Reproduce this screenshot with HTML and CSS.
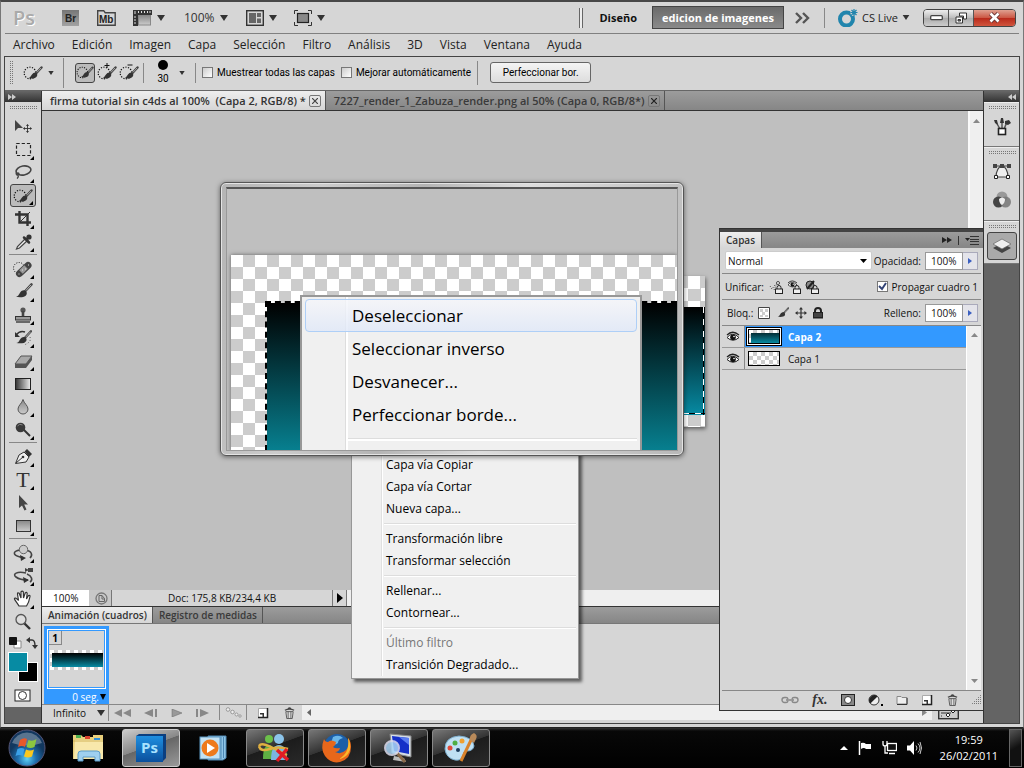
FILE: index.html
```html
<!DOCTYPE html>
<html lang="es">
<head>
    <meta charset="UTF-8">
    <meta name="viewport" content="width=device-width, initial-scale=1.0">
    <title>Photoshop - firma tutorial sin c4ds</title>
    <link rel="stylesheet" href="styles.css">
</head>
<body>

    <!-- shared icons -->
    <svg class="defs" width="0" height="0" aria-hidden="true">
        <defs>
            <linearGradient id="g" x1="0" x2="1"><stop stop-color="#333"/><stop offset="1" stop-color="#eee"/></linearGradient>
            <linearGradient id="gv" x1="0" x2="0" y1="0" y2="1"><stop stop-color="#888"/><stop offset="1" stop-color="#ccc"/></linearGradient>
            <radialGradient id="orb" cx=".5" cy=".8"><stop stop-color="#5fd0f5"/><stop offset=".5" stop-color="#1f6fae"/><stop offset="1" stop-color="#12385f"/></radialGradient>
            <linearGradient id="blue" x1="0" x2="0" y1="0" y2="1"><stop stop-color="#1f8fe0"/><stop offset="1" stop-color="#0a4f9c"/></linearGradient>
            <symbol id="brush" viewBox="0 0 20 18">
                <path d="M19 1.500 12 9" stroke="#444" stroke-width="2.600" stroke-linecap="round"/>
                <path d="M18.500 2 13 8" stroke="#bbb" stroke-width="1"/>
                <path d="M13 8.500c2 2 1 5-2 6-3 .8-6 .6-8.500 0 3-.6 3-2.500 4.500-4.500 1.500-2 4-3 6-1.500z" fill="#333"/>
            </symbol>
            <symbol id="quick" viewBox="0 0 20 18">
                <circle cx="7" cy="9" r="5.800" fill="none" stroke="#111" stroke-width="1.200" stroke-dasharray="1.200 1.400"/>
                <path d="M18.500 3.500 13 9.500" stroke="#444" stroke-width="2.400" stroke-linecap="round"/>
                <path d="M18 4 14 8.300" stroke="#bbb" stroke-width=".8"/>
                <path d="M13.500 9c1.500 1.700.8 4-1.600 5-2.300.8-4.500.6-6.400 0 2-.6 2.300-2 3.500-3.500 1.200-1.600 3-2.600 4.500-1.500z" fill="#333"/>
            </symbol>
            <symbol id="down" viewBox="0 0 8 6"><path d="M0 0h8L4 6z" fill="#333"/></symbol>
            <symbol id="eye" viewBox="0 0 14 12">
                <path d="M1 6.500Q6.500 0 13 6.500 7 12 1 6.500z" fill="#fff" stroke="#222"/>
                <circle cx="7" cy="6.300" r="2.800" fill="#111"/><circle cx="8" cy="5.500" r=".8" fill="#fff"/>
                <path d="M1 4Q6.500-1.500 13 4" fill="none" stroke="#222" stroke-width="1.200"/>
            </symbol>
            <symbol id="lock" viewBox="0 0 8 9"><path d="M2 4V2.500a2 2 0 0 1 4 0V4" fill="none" stroke="#222"/><rect x=".5" y="4" width="7" height="4.500" fill="#eee" stroke="#222"/></symbol>
            <symbol id="move" viewBox="0 0 12 12"><path d="M6 1v10M1 6h10" stroke="#333" stroke-width="1.200"/><path d="M6 0 8 2.600H4zM6 12 4 9.400h4zM0 6l2.600-2v4zM12 6 9.400 8V4z" fill="#333"/></symbol>
            <symbol id="page" viewBox="0 0 12 12"><path d="M1.500 1.500h9v9h-9z" fill="#fff" stroke="#aaa"/><path d="M10.500 1v9.500H1" fill="none" stroke="#222" stroke-width="1.500"/><path d="M3 6h4v4H5.500V7.500H3z" fill="#333"/></symbol>
            <symbol id="trash" viewBox="0 0 12 13"><path d="M1 3.500q5-2.500 10 0M4.500 2q1.500-2 3 0" fill="none" stroke="#444" stroke-width="1.500"/><path d="M2 5h8l-1 7.500H3z" fill="#ddd" stroke="#555"/><path d="M4.500 5v7M7.500 5v7" stroke="#444" stroke-width=".8"/></symbol>
        </defs>
    </svg>

    <div class="app">
        <header class="titlebar">
            <span class="ps-logo">Ps</span>
            <button class="plain br" aria-label="Bridge"><svg width="17" height="16"><rect width="17" height="16" fill="url(#gv)"/><rect x="0" y="0" width="17" height="16" fill="#555" opacity=".35"/><text x="3" y="12" class="icon-text">Br</text></svg></button>
            <button class="plain mb" aria-label="Mini Bridge"><svg width="19" height="16"><path d="M.7 15.300V.7h6l1.500 2h10v12.600z" fill="none" stroke="#444" stroke-width="1.400"/><text x="2" y="13" class="icon-text">Mb</text></svg></button>
            <button class="plain film" aria-label="Ver extras"><svg width="19" height="16"><path d="M0 0h19v5H5v11H0z" fill="#333"/><path d="M2 1v3M5.500 1v2M8.500 1v2M11.500 1v2M14.500 1v2M17 1v2M1 7h2M1 10h2M1 13h2" stroke="#ddd"/><rect x="5.500" y="5.500" width="12" height="9.500" fill="url(#gv)" stroke="#888"/></svg><svg width="8" height="6"><use href="#down"/></svg></button>
            <button class="plain zoom">100%<svg width="8" height="6"><use href="#down"/></svg></button>
            <button class="plain arrange" aria-label="Organizar documentos"><svg width="18" height="16"><rect x=".7" y=".7" width="16.600" height="14.600" fill="none" stroke="#333" stroke-width="1.400"/><path d="M3 3h7v10H3zM11 3h4v4h-4zM11 8.500h4V13h-4z" fill="#666"/></svg><svg width="8" height="6"><use href="#down"/></svg></button>
            <button class="plain screen" aria-label="Modo de pantalla"><svg width="18" height="16"><path d="M.5 4V.5H4M14 .5h3.500V4M17.500 12v3.500H14M4 15.500H.500V12" fill="none" stroke="#333"/><rect x="3.500" y="3.500" width="11" height="9" fill="#888" stroke="#222" stroke-width="1.200"/></svg><svg width="8" height="6"><use href="#down"/></svg></button>
            <span class="double-line"></span>
            <button class="plain design">Diseño</button>
            <button class="workspace-on">edicion de imagenes</button>
            <button class="plain more" aria-label="Más espacios"><svg width="15" height="12"><path d="M1 1l5 5-5 5M8 1l5 5-5 5" fill="none" stroke="#555" stroke-width="2.400"/></svg></button>
            <span class="line"></span>
            <button class="plain cslive"><svg width="20" height="18"><circle cx="8.500" cy="10" r="6.500" fill="none" stroke="#2185ad" stroke-width="4"/><path d="M16 0v7M12.500 3.500h7M13.500 1l5 5M18.500 1l-5 5" stroke="#d6d6d6" stroke-width="3"/><path d="M16 0v7M12.500 3.500h7M13.500 1l5 5M18.500 1l-5 5" stroke="#2185ad" stroke-width="1.200"/></svg><span>CS Live</span><svg width="8" height="5"><use href="#down"/></svg></button>
            <div class="win-buttons">
                <button aria-label="Minimizar"><svg width="13" height="6"><rect x=".7" y=".7" width="11.600" height="4" rx="1" fill="#fff" stroke="#444" stroke-width="1.300"/></svg></button>
                <button aria-label="Restaurar"><svg width="12" height="12"><path d="M4.500 1h7v6h-3V4h-4z" fill="#fff" stroke="#333"/><path d="M1 5h6.500v6H1z" fill="#fff" stroke="#333"/><path d="M3 7.500h2.500v1.500H3z" fill="#777" stroke="#333"/></svg></button>
                <button class="close" aria-label="Cerrar"><svg width="13" height="11"><path d="M2.500 1.500l8 8M10.500 1.500l-8 8" stroke="#633" stroke-width="4.400"/><path d="M2.500 1.500l8 8M10.500 1.500l-8 8" stroke="#fff" stroke-width="2.600"/></svg></button>
            </div>
        </header>

        <nav class="menubar">
            <a href="#">Archivo</a>
            <a href="#">Edición</a>
            <a href="#">Imagen</a>
            <a href="#">Capa</a>
            <a href="#">Selección</a>
            <a href="#">Filtro</a>
            <a href="#">Análisis</a>
            <a href="#">3D</a>
            <a href="#">Vista</a>
            <a href="#">Ventana</a>
            <a href="#">Ayuda</a>
        </nav>

        <div class="frame">
            <div class="options">
                <span class="grip"></span>
                <button class="plain preset" aria-label="Herramienta"><svg width="20" height="18"><use href="#quick"/></svg><svg width="6" height="4"><use href="#down"/></svg></button>
                <span class="line tall"></span>
                <div class="modes">
                    <button class="plain on" aria-label="Nueva"><svg width="18" height="17"><use href="#quick"/></svg></button>
                    <button class="plain" aria-label="Añadir"><svg width="20" height="19" viewBox="0 0 20 19"><use href="#quick" y="1" width="20" height="18"/><path d="M10 0v5M7.500 2.500h5" stroke="#111"/></svg></button>
                    <button class="plain" aria-label="Restar"><svg width="20" height="19" viewBox="0 0 20 19"><use href="#quick" y="1" width="20" height="18"/><path d="M8.500 2h5" stroke="#111"/></svg></button>
                </div>
                <span class="line"></span>
                <button class="plain size"><span class="dot"></span>30</button>
                <svg class="size-arrow" width="6" height="4"><use href="#down"/></svg>
                <span class="line"></span>
                <label class="check"><input type="checkbox"> Muestrear todas las capas</label>
                <label class="check"><input type="checkbox"> Mejorar automáticamente</label>
                <span class="line"></span>
                <button class="refine">Perfeccionar bor.</button>
            </div>

            <div class="main">
                <aside class="toolbox">
                    <div class="dark-head"><svg width="8" height="6"><path d="M0 0l4 3-4 3zM4 0l4 3-4 3z" fill="#ccc"/></svg></div>
                    <div class="dots"></div>
                    <div class="tools">
                        <button class="tool single" aria-label="Mover"><svg width="24" height="20"><path d="M4 3v11l3-3h5z" fill="#444"/><use href="#move" x="12" y="7" width="9" height="9"/></svg></button>
                        <button class="tool" aria-label="Marco"><svg width="24" height="20"><rect x="5.500" y="3.500" width="14" height="12" fill="none" stroke="#222" stroke-width="1.200" stroke-dasharray="3.200 2"/></svg></button>
                        <button class="tool" aria-label="Lazo"><svg width="24" height="20"><ellipse cx="12.500" cy="7.500" rx="7.500" ry="4.500" transform="rotate(-10 12.500 7.500)" fill="none" stroke="#444" stroke-width="1.600"/><path d="M6 9c-2 2 0 4 1.500 2.500S6 9 7 11.500s0 3-1 4" fill="none" stroke="#444" stroke-width="1.300"/></svg></button>
                        <button class="tool on" aria-label="Selección rápida"><svg width="20" height="18"><use href="#quick"/></svg></button>
                        <button class="tool" aria-label="Recortar"><svg width="24" height="20"><path d="M8.500 2v11.500H20M4 5.500h12.500V17" fill="none" stroke="#333" stroke-width="2.400"/><path d="M8.500 13.500 19 3" stroke="#333"/></svg></button>
                        <button class="tool" aria-label="Cuentagotas"><svg width="24" height="20"><path d="M15 6 6.500 14.500 5.500 17l3-1L17 8" fill="#eee" stroke="#444" stroke-width="1.200"/><path d="M13 5.500l5 5M16.500 6.500l2-2" stroke="#333" stroke-width="2.500" stroke-linecap="round"/><circle cx="18" cy="5" r="2.600" fill="#333"/></svg></button>
                        <hr>
                        <button class="tool" aria-label="Pincel corrector"><svg width="24" height="20"><circle cx="8" cy="9" r="5.500" fill="none" stroke="#111" stroke-dasharray="1 1.500"/><path d="M8.500 14.500l8.500-8" stroke="#444" stroke-width="7" stroke-linecap="round"/><path d="M10 13l5-5" stroke="#999" stroke-width="5"/><path d="M7.500 15h1M17 6h1M11 11h1M14 10h1" stroke="#ddd"/></svg></button>
                        <button class="tool" aria-label="Pincel"><svg width="20" height="17"><use href="#brush"/></svg></button>
                        <button class="tool" aria-label="Tampón"><svg width="24" height="20"><circle cx="12" cy="5" r="2.600" fill="#555"/><path d="M12 6v7" stroke="#444" stroke-width="2.600"/><rect x="4.500" y="11.500" width="15" height="3.500" fill="#999" stroke="#333"/><path d="M5 17h14" stroke="#444" stroke-width="1.500"/></svg></button>
                        <button class="tool" aria-label="Pincel de historia"><svg width="24" height="20"><use href="#brush" x="3" y="2" width="18" height="16"/><path d="M5 7q4-5 9-3" fill="none" stroke="#333" stroke-width="1.500"/><path d="M4 4v5h5z" fill="#333"/><path d="M19 9q2 5-6 8" fill="none" stroke="#555" stroke-dasharray="1 2"/></svg></button>
                        <button class="tool" aria-label="Borrador"><svg width="24" height="20"><path d="M4 13l6-8h11l-6 8z" fill="#aaa" stroke="#555"/><path d="M4 13h11v4H4zM15 13l6-8v4l-6 8z" fill="#555"/></svg></button>
                        <button class="tool" aria-label="Degradado"><svg width="24" height="20"><rect x="4.500" y="4.500" width="15" height="11" fill="url(#g)" stroke="#222"/></svg></button>
                        <button class="tool" aria-label="Desenfocar"><svg width="24" height="20"><path d="M12 2.500c1 4 5 6 5 9.500a5 5 0 0 1-10 0c0-3.500 4-5.500 5-9.500z" fill="url(#gv)" stroke="#555"/></svg></button>
                        <button class="tool" aria-label="Sobreexponer"><svg width="24" height="20"><path d="M12 9l7 7" stroke="#333" stroke-width="2"/><circle cx="9.500" cy="7.500" r="4.800" fill="#3a3a3a"/><path d="M6.500 6q2-3 5-1" stroke="#888" fill="none"/></svg></button>
                        <hr>
                        <button class="tool" aria-label="Pluma"><svg width="24" height="20"><path d="M4.500 16.500 8 8l5-3 5 5-3 5z" fill="#eee" stroke="#333"/><path d="M13.500 4.500 16 2l5 5-3 3z" fill="#333"/><path d="M5 16l7-6" stroke="#333"/><circle cx="12" cy="10" r="1.300" fill="#333"/></svg></button>
                        <button class="tool type" aria-label="Texto">T</button>
                        <button class="tool" aria-label="Selección de trazado"><svg width="24" height="20"><path d="M8 2v13l3-2.500 2.500 5 2-1-2.300-5H17z" fill="#444"/></svg></button>
                        <button class="tool" aria-label="Rectángulo"><svg width="24" height="20"><rect x="5.500" y="4.500" width="14" height="11" fill="url(#gv)" stroke="#333"/></svg></button>
                        <hr>
                        <button class="tool" aria-label="Rotar 3D"><svg width="24" height="20"><path d="M9 7C2 8 1 12 9 14l4 1M14 7c7 1 8 5 5 8" fill="none" stroke="#444" stroke-width="1.600"/><path d="M9 12l6 3-5 3z" fill="#333"/><circle cx="12.500" cy="6.500" r="4.200" fill="#ccc" stroke="#666"/></svg></button>
                        <button class="tool" aria-label="Cámara 3D"><svg width="24" height="20"><path d="M15 7C6 5 1 8 5 11s8 3 12 3M16 8c5 2 6 6 3 8" fill="none" stroke="#444" stroke-width="1.600"/><path d="M12 11l6 3-5 3z" fill="#333"/><path d="M14 2l3 1.500V2h5v4h-5V4.500L14 6z" fill="#444"/></svg></button>
                        <button class="tool" aria-label="Mano"><svg width="24" height="20"><path d="M8 17C6 13.500 4 11.500 3.500 10s2-1.500 4 1.500L6.500 5q0-1.800 1.700-.8L10 9V2.800q1.200-1.500 2.300 0L12.500 9l1.700-5q1.500-1.400 2 .3L15.500 10l2-3.500q1.700-.5 1.500 1-1 6-3.500 9.500z" fill="#fff" stroke="#333" stroke-width="1.200"/></svg></button>
                        <button class="tool single" aria-label="Zoom"><svg width="24" height="20"><path d="M13 11l6 6" stroke="#333" stroke-width="2.400"/><circle cx="10" cy="7.500" r="5" fill="#ddd" stroke="#555" stroke-width="1.300"/></svg></button>
                        <svg class="swatches" width="32" height="74">
                            <path d="M6 8h7v7H6z" fill="#fff" stroke="#888"/><path d="M1.500 4.500h7v7h-7z" fill="#111" stroke="#111"/>
                            <path d="M20 7h4q3 0 3 6" fill="none" stroke="#333" stroke-width="1.400"/><path d="M18 7l4-3v6zM27 16l-3-4h6z" fill="#333"/>
                            <rect x="10.500" y="29.500" width="19" height="19" fill="#000" stroke="#fff"/>
                            <rect x=".5" y="19.500" width="19" height="19" fill="#078ba3" stroke="#fff"/>
                            <rect x="7" y="57" width="15" height="11" fill="#fff" stroke="#222"/><circle cx="14.500" cy="62.500" r="4" fill="#fff" stroke="#333"/>
                        </svg>
                    </div>
                    <div class="rest"></div>
                </aside>

                <section class="center">
                    <div class="tabs doc-tabs">
                        <div class="tab on">firma tutorial sin c4ds al 100%&nbsp; (Capa 2, RGB/8) *<button class="x" aria-label="Cerrar"><svg width="6" height="6"><path d="M0 0l6 6M6 0 0 6" stroke="#444" stroke-width="1.200"/></svg></button></div>
                        <div class="tab">7227_render_1_Zabuza_render.png al 50% (Capa 0, RGB/8*)<button class="x" aria-label="Cerrar"><svg width="6" height="6"><path d="M0 0l6 6M6 0 0 6" stroke="#222" stroke-width="1.200"/></svg></button></div>
                    </div>
                    <div class="work">
                        <div class="canvas"></div>
                        <div class="vscroll"><svg width="7" height="4"><path d="M3.500 0 7 4H0z" fill="#888"/></svg></div>
                    </div>
                    <div class="status">
                        <input type="text" value="100%" aria-label="Zoom">
                        <button class="plain info" aria-label="Estado"><svg width="13" height="13"><circle cx="6.500" cy="6.500" r="5.500" fill="none" stroke="#777" stroke-width="1.300"/><path d="M4 3.500h3l2.500 3V9.500H4zM7 3.500V7h3" fill="none" stroke="#666"/></svg></button>
                        <span class="doc">Doc: 175,8 KB/234,4 KB</span>
                        <button class="plain go" aria-label="Más"><svg width="6" height="10"><path d="M0 0l6 5-6 5z" fill="#000"/></svg></button>
                        <span class="hscroll"></span>
                    </div>
                    <div class="tabs anim-tabs">
                        <div class="tab on">Animación (cuadros)</div>
                        <div class="tab">Registro de medidas</div>
                    </div>
                    <div class="frames">
                        <div class="cell">
                            <div class="shot"><span>1</span><div class="strip"><i></i></div></div>
                            <button class="plain delay">0 seg.<svg width="6" height="6"><path d="M0 0h6L3 6z" fill="#000"/></svg></button>
                        </div>
                    </div>
                    <div class="controls">
                        <button class="plain loop">Infinito<svg width="8" height="6"><use href="#down"/></svg></button>
                        <div class="play">
                            <button class="plain" aria-label="Primer cuadro"><svg width="18" height="8"><path d="M0 4 8 0v8zM9 4l8-4v8z" fill="#888"/></svg></button>
                            <button class="plain" aria-label="Cuadro anterior"><svg width="15" height="8"><path d="M0 4l9-4v8zM11 0h2v8h-2z" fill="#888"/></svg></button>
                            <button class="plain" aria-label="Reproducir"><svg width="12" height="8"><path d="M1 0l10 4L1 8z" fill="#999" stroke="#666" stroke-width=".5"/></svg></button>
                            <button class="plain" aria-label="Cuadro siguiente"><svg width="15" height="8"><path d="M1 0h2v8H1zM5 0l9 4-9 4z" fill="#888"/></svg></button>
                        </div>
                        <button class="plain tween" aria-label="Intercalar"><svg width="18" height="11"><g fill="#eee" stroke="#999"><circle cx="3" cy="2.500" r="1.800"/><circle cx="7.500" cy="5" r="1.800"/><circle cx="11.500" cy="7.500" r="1.500"/><circle cx="15" cy="9" r="1.200"/></g></svg></button>
                        <button class="plain new-frame" aria-label="Duplicar"><svg width="12" height="12"><use href="#page"/></svg></button>
                        <button class="plain del-frame" aria-label="Eliminar"><svg width="11" height="12"><use href="#trash"/></svg></button>
                        <div class="hscroll anim-scroll"><svg width="4" height="7"><path d="M4 0v7L0 3.500z" fill="#666"/></svg><svg width="5" height="7"><path d="M0 0v7l5-3.500z" fill="#888"/></svg></div>
                        <button class="plain convert" aria-label="Convertir"><svg width="21" height="14"><rect x=".7" y=".7" width="19.600" height="12" fill="#ccc" stroke="#333" stroke-width="1.400"/><path d="M3 4h1M3 7h10M3 10h1" stroke="#333"/><path d="M8 9l2-2 2 2-2 2zM13 5l2-2 2 2-2 2z" fill="#fff" stroke="#222"/></svg></button>
                    </div>
                </section>

                <aside class="dock">
                    <div class="dark-head"><svg width="8" height="6"><path d="M4 0v6L0 3zM8 0v6L4 3z" fill="#ccc"/></svg></div>
                    <div class="group one"><div class="dots"></div>
                        <button class="plain" aria-label="Pinceles"><svg width="20" height="22"><path d="M8 13 4 6M10 13V5M12 13l3-7" stroke="#555" stroke-width="1.500"/><path d="M2 4l3 0 1 5-3-2zM9 2h2l1 5H8zM13 5l4-1 2 3-3 2-3-1z" fill="#333"/><rect x="6.500" y="12.500" width="7" height="6" fill="#fff" stroke="#222" stroke-width="1.600"/></svg></button>
                    </div>
                    <div class="group two"><div class="dots"></div>
                        <button class="plain" aria-label="Trazados"><svg width="20" height="20"><path d="M2 4h16M4 15C4 9 7 4 10 4s6 5 6 11z" fill="#eee" stroke="#444" stroke-width="1.200"/><path d="M1 2h4v4H1zM8 2h4v4H8zM15 2h4v4h-4z" fill="#444"/><path d="M2.500 13.500h3v3h-3zM14.500 13.500h3v3h-3z" fill="#fff" stroke="#222"/></svg></button>
                        <button class="plain" aria-label="Canales"><svg width="20" height="20"><circle cx="10" cy="7" r="5.500" fill="#999"/><circle cx="6.500" cy="12" r="5.500" fill="#444"/><circle cx="13.500" cy="12" r="5.500" fill="#777" opacity=".85"/><path d="M7 9q3-3 6 0 0 4-3 6-3-2-3-6z" fill="#eee"/></svg></button>
                    </div>
                    <div class="group three"><div class="dots"></div>
                        <button class="plain on" aria-label="Capas"><svg width="20" height="20"><path d="M1 12l9-5 9 5-9 5z" fill="#444"/><path d="M1 8l9-5 9 5-9 5z" fill="#eee" stroke="#666" stroke-width=".7"/></svg></button>
                    </div>
                </aside>
            </div>
        </div>
    </div>

    <!-- document under the lens -->
    <div class="document"><div class="fill"></div></div>

    <div class="context-menu" role="menu">
        <div class="items">
            <button>Capa vía Copiar</button>
            <button>Capa vía Cortar</button>
            <button>Nueva capa...</button>
            <hr>
            <button>Transformación libre</button>
            <button>Transformar selección</button>
            <hr>
            <button>Rellenar...</button>
            <button>Contornear...</button>
            <hr>
            <button disabled>Último filtro</button>
            <button>Transición Degradado...</button>
        </div>
    </div>

    <div class="lens">
        <div class="glass">
            <div class="big-doc">
                <div class="big-fill">
                    <div class="big-menu" role="menu">
                        <button class="hot">Deseleccionar</button>
                        <button>Seleccionar inverso</button>
                        <button>Desvanecer...</button>
                        <button>Perfeccionar borde...</button>
                        <hr>
                    </div>
                </div>
            </div>
        </div>
    </div>

    <section class="layers-panel">
        <div class="panel-top"></div>
        <div class="tabs panel-tabs">
            <div class="tab on">Capas</div>
            <div class="panel-icons">
                <svg width="10" height="6"><path d="M0 0l5 3-5 3zM5 0l5 3-5 3z" fill="#222"/></svg>
                <span class="bar"></span>
                <svg width="14" height="9"><path d="M0 2h5L2.500 5z" fill="#222"/><path d="M5 .5h9M5 3.500h9M5 5.500h9M5 8.500h9" stroke="#333"/></svg>
            </div>
        </div>
        <div class="prow">
            <select aria-label="Modo de fusión"><option>Normal</option></select>
            <label class="num">Opacidad: <input type="text" value="100%"></label><button class="step" aria-label="Opacidad"><svg width="4" height="6"><path d="M0 0l4 3-4 3z" fill="#3b5fc0"/></svg></button>
        </div>
        <div class="prow">
            <span>Unificar:</span>
            <div class="icons">
                <svg width="14" height="14"><path d="M1 6l2 3 3-4M5 10l3-7" stroke="#444" stroke-dasharray="1 1.500" fill="none"/><circle cx="9" cy="3" r="1.500" fill="#fff" stroke="#444"/><use href="#lock" x="6" y="5" width="8" height="9"/></svg>
                <svg width="14" height="14"><use href="#eye" width="11" height="9"/><use href="#lock" x="6" y="5" width="8" height="9"/></svg>
                <svg width="14" height="14"><circle cx="5" cy="5" r="4" fill="#888" stroke="#222"/><path d="M2 9l7-8" stroke="#222" stroke-width="2"/><use href="#lock" x="6" y="5" width="8" height="9"/></svg>
            </div>
            <label class="check"><input type="checkbox" checked> Propagar cuadro 1</label>
        </div>
        <div class="prow">
            <span class="bloq">Bloq.:</span>
            <div class="icons wide">
                <svg width="12" height="12"><path d="M.5.500h11v11H.500z" fill="#fff" stroke="#444"/><path d="M2 2h3v3H2zM7 2h3v3H7zM4 5h3v3H4zM2 8h3v2H2zM7 8h3v2H7z" fill="#ccc"/></svg>
                <svg width="13" height="12"><use href="#brush"/></svg>
                <svg width="12" height="12"><use href="#move"/></svg>
                <svg width="10" height="12"><path d="M2 6V4a3 3 0 0 1 6 0v2" fill="none" stroke="#222" stroke-width="2"/><rect y="5" width="10" height="6.500" fill="#222"/><path d="M1 7h8M1 9h8" stroke="#666"/></svg>
            </div>
            <label class="num">Relleno: <input type="text" value="100%"></label><button class="step" aria-label="Relleno"><svg width="4" height="6"><path d="M0 0l4 3-4 3z" fill="#3b5fc0"/></svg></button>
        </div>
        <div class="layer-area">
            <div class="layer-list">
                <div class="layer on">
                    <button class="plain vis" aria-label="Visibilidad"><svg width="14" height="12"><use href="#eye"/></svg></button>
                    <span class="thumb full"><i></i></span>
                    <span>Capa 2</span>
                </div>
                <div class="layer">
                    <button class="plain vis" aria-label="Visibilidad"><svg width="14" height="12"><use href="#eye"/></svg></button>
                    <span class="thumb"></span>
                    <span>Capa 1</span>
                </div>
            </div>
            <div class="layer-scroll">
                <svg width="7" height="4"><path d="M3.500 0 7 4H0z" fill="#888"/></svg>
                <svg width="7" height="4"><path d="M0 0h7L3.500 4z" fill="#888"/></svg>
            </div>
        </div>
        <div class="panel-foot">
            <button class="plain" aria-label="Enlazar"><svg width="18" height="8"><path d="M7 3a2 2 0 0 0-2-1.500H3.500a2.500 2.500 0 0 0 0 5H5A2 2 0 0 0 7 5M11 3a2 2 0 0 1 2-1.500h1.500a2.500 2.500 0 0 1 0 5H13A2 2 0 0 1 11 5M5 4h8" fill="none" stroke="#888" stroke-width="1.400"/></svg></button>
            <button class="plain fx" aria-label="Estilo">fx.</button>
            <button class="plain" aria-label="Máscara"><svg width="14" height="12"><rect x=".5" y=".5" width="13" height="11" fill="#888" stroke="#222"/><circle cx="7" cy="6" r="3.500" fill="#fff" stroke="#333"/></svg></button>
            <button class="plain" aria-label="Ajuste"><svg width="15" height="12"><circle cx="6" cy="6" r="5" fill="#eee" stroke="#333"/><path d="M2.400 9.500A5 5 0 0 1 9.500 2.500z" fill="#222"/><path d="M13 10h2v2h-2z" fill="#000"/></svg></button>
            <button class="plain" aria-label="Grupo"><svg width="12" height="10"><path d="M1 9V1.500h4l1 1h5V9z" fill="#eee" stroke="#888"/><path d="M11 3v6.500H1" fill="none" stroke="#333"/></svg></button>
            <button class="plain" aria-label="Nueva capa"><svg width="12" height="12"><use href="#page"/></svg></button>
            <button class="plain" aria-label="Eliminar capa"><svg width="11" height="12"><use href="#trash"/></svg></button>
            <span class="corner"></span>
        </div>
    </section>

    <footer class="taskbar">
        <button class="plain start" aria-label="Inicio"><svg width="38" height="38"><circle cx="19" cy="19" r="18" fill="url(#orb)" stroke="#557"/><path d="M4 14a16 16 0 0 1 30 0q-15 5-30 0z" fill="#fff" opacity=".3"/><path d="M12 11q4-3 7-1l-2 8q-3-2-7 0z" fill="#e8582a"/><path d="M20.500 11q4 2 8-1l-2 8q-4 2-8 0z" fill="#8cc63f"/><path d="M9.500 20q4-2 7 0l-2 7q-3-2-7 0z" fill="#3aa0e8"/><path d="M18 20.500q4 2 8 0l-2 7q-4 2-8 0z" fill="#fbc81e"/></svg></button>
        <div class="apps">
            <button class="task" aria-label="Explorador"><svg width="34" height="32"><path d="M1 5V3h8l2 2h10V3h10v24H1z" fill="#e8cf7c"/><path d="M3 8h28v19H2z" fill="#f8e8ab"/><path d="M4 3h5v3H4z" fill="#4caf50"/><path d="M13 4h5v3h-5z" fill="#d9432f"/><path d="M22 6h6v2h-6z" fill="#2f8fd9"/><path d="M1 9h30" stroke="#d2b45b"/><path d="M6 29v-7q0-3 3-3h16q3 0 3 3v7h-5v-4H11v4z" fill="#9fd0ef" stroke="#5c9cc8"/></svg></button>
            <button class="task open active" aria-label="Photoshop"><svg width="32" height="30"><path d="M1 3 4 1h27v24l-3 3z" fill="#0b3f80"/><rect x="1" y="3" width="27" height="26" fill="url(#blue)"/><text x="6" y="20" class="ps-text">Ps</text></svg></button>
            <button class="task" aria-label="Reproductor"><svg width="28" height="28"><path d="M9 2h18v22l-3 2H9z" fill="#8fc5e6" stroke="#4e88b4"/><path d="M22 3v22M24.500 3v21" stroke="#4e88b4"/><rect x="1" y="3" width="20" height="22" fill="#c3e2f4" stroke="#5c97c2"/><circle cx="11" cy="14" r="8.500" fill="#ee7a1c"/><path d="M8 9l8 5-8 5z" fill="#fff"/></svg></button>
            <button class="task open" aria-label="Messenger"><svg width="34" height="30"><circle cx="11" cy="6" r="4" fill="#6cc04a"/><path d="M5 26q0-14 6-14t7 14z" fill="#5fb043"/><circle cx="21" cy="6" r="5" fill="#8cc4ea"/><path d="M13 27q0-15 8-15t8 15z" fill="#7ab5df"/><path d="M1 13q2-4 12 1t16 8M1 13q1 6 11 3 8-3 18 0" fill="none" stroke="#e0b040" stroke-width="2.500"/><path d="M19 17l11 10M29 16 19 28" stroke="#e01b24" stroke-width="3.500"/></svg></button>
            <button class="task open" aria-label="Firefox"><svg width="34" height="32"><circle cx="17" cy="15" r="13" fill="#1d5fa8"/><path d="M13 5q6-3 10 1-5 1-5 5-4 3-7 0z" fill="#69b5e8"/><path d="M4 7q-4 10 1 17 6 8 15 6 11-3 11-15 0-6-3-9 2 8-2 12-5 5-11 2 4 0 5-4-5 1-7-1 3-2 3-5-5-3-8 0Q5 10 4 7z" fill="#e8671b"/><path d="M28 6q3 4 2 12-3 8-11 9 11-6 9-21z" fill="#fbb82c"/></svg></button>
            <button class="task open" aria-label="Lupa"><svg width="34" height="32"><path d="M8 2l21 2v21L10 21z" fill="#d5dde5" stroke="#888"/><path d="M10 4l17 2v16l-15-3z" fill="#1530c8"/><path d="M17 5l10 1v7z" fill="#5b7df0"/><path d="M12 24l10 2 2 4-13-2z" fill="#bbb"/><path d="M15 21l8 9" stroke="#8a6a4a" stroke-width="3"/><circle cx="10" cy="16" r="7" fill="#a9d4f5" opacity=".85" stroke="#dde" stroke-width="2"/></svg></button>
            <button class="task open" aria-label="Paint"><svg width="34" height="32"><path d="M1 17Q1 5 15 4q14 1 15 10-1 5-7 5-4 0-4 4-1 6-8 5Q2 26 1 17z" fill="#bfe0f3" stroke="#7fb0d0"/><circle cx="6" cy="16" r="2.500" fill="#e04a3a"/><circle cx="11" cy="11" r="2.500" fill="#4fae42"/><circle cx="18" cy="9" r="2.500" fill="#f0a030"/><circle cx="14" cy="18" r="2" fill="#1b3a5b"/><path d="M17 29 28 6" stroke="#d9822b" stroke-width="3"/><path d="M26 8q-1-5 4-7 4 2 2 6l-2 4z" fill="#b98a5a"/></svg></button>
        </div>
        <div class="tray">
            <svg width="8" height="5"><path d="M4 0l4 4H0z" fill="#fff"/></svg>
            <svg width="14" height="14"><path d="M1.500 0v14" stroke="#fff" stroke-width="1.500"/><path d="M3 2q3-1 5 1h5v5H8Q6 6 3 8z" fill="#fff"/></svg>
            <svg width="15" height="14"><path d="M1 0v3q0 2 2 2t2-2V0M3 5v7h3" fill="none" stroke="#fff" stroke-width="1.300"/><rect x="5.500" y="2.500" width="9" height="7" fill="#111" stroke="#fff" stroke-width="1.300"/><path d="M7 12.500h6" stroke="#fff" stroke-width="1.500"/></svg>
            <svg width="15" height="14"><path d="M0 4.500h3L7 0v14L3 9.500H0z" fill="#fff"/><path d="M9 4.500q2 2.500 0 5M11 2.500q4 4.500 0 9M13 1q3 6 0 12" fill="none" stroke="#ccc"/></svg>
        </div>
        <div class="clock"><span>19:59</span><span>26/02/2011</span></div>
        <button class="plain show-desktop" aria-label="Mostrar escritorio"></button>
    </footer>

</body>
</html>
```

FILE: styles.css
```css
* {
    box-sizing: border-box;
}
body {
    margin: 0;
    height: 100vh;
    display: flex;
    flex-direction: column;
    overflow: hidden;
    position: relative;
    background: #000;
    color: #111;
    font-family: "Open Sans", "Noto Sans", sans-serif;
    font-size: 11px;
    line-height: 16px;
}
button, input, select {
    font: inherit;
    color: inherit;
    margin: 0;
    padding: 0;
}
svg {
    display: block;
    flex: none;
    fill: none;
}
.defs {
    position: absolute;
}
.plain {
    background: none;
    border: none;
    display: flex;
    align-items: center;
    flex: none;
}
.icon-text {
    font-family: "Liberation Sans", sans-serif;
    font-weight: bold;
    font-size: 10px;
    fill: #222;
}
.line {
    width: 1px;
    height: 20px;
    background: #888;
    flex: none;
}

/* window */
.app {
    flex: 1;
    min-height: 0;
    display: flex;
    flex-direction: column;
    background: #d6d6d6;
    border: 1px solid #777;
    border-top: 2px solid #484848;
    border-bottom-color: #222;
}
.titlebar {
    height: 32px;
    display: flex;
    align-items: center;
    margin: 0 4px;
    padding: 0 3px 0 8px;
    border-bottom: 1px solid #808080;
    flex: none;
}
.ps-logo {
    width: 49px;
    font-size: 20px;
    font-weight: 600;
    color: #aaa;
    text-shadow: 1px 1px 0 #fff;
}
.br { width: 35px; }
.mb { width: 36px; }
.film { width: 51px; gap: 5px; }
.zoom { width: 62px; gap: 5px; font-size: 12px; color: #333; }
.arrange { width: 48px; gap: 5px; }
.screen { gap: 5px; }
.double-line {
    width: 4px;
    height: 20px;
    margin: 0 16px 0 auto;
    border: 1px solid #666;
    border-width: 0 1px;
    background: #eee;
    flex: none;
}
.design {
    font-weight: bold;
    margin-right: 15px;
}
.workspace-on {
    width: 132px;
    height: 23px;
    background: linear-gradient(#6a6a6a, #8a8a8a);
    border: 1px solid #444;
    color: #fff;
    font-weight: bold;
    flex: none;
    white-space: nowrap;
}
.more { margin: 0 14px 0 11px; }
.cslive {
    margin: 0 13px;
    gap: 4px;
    color: #222;
}
.win-buttons {
    display: flex;
    height: 18px;
    border: 1px solid #444;
    border-radius: 4px;
    overflow: hidden;
    flex: none;
}
.win-buttons button {
    width: 25px;
    border: none;
    border-right: 1px solid #555;
    background: linear-gradient(#eee, #bbb 50%, #aaa 50%, #ccc);
    display: flex;
    align-items: center;
    justify-content: center;
}
.win-buttons .close {
    width: 41px;
    border-right: none;
    background: linear-gradient(#dfa090, #cb5542 50%, #b8291a 50%, #d0553d);
}
.menubar {
    height: 22px;
    display: flex;
    align-items: center;
    gap: 17px;
    padding-left: 12px;
    font-size: 12px;
    flex: none;
}
.menubar a {
    color: #222;
    text-decoration: none;
}
.frame {
    flex: 1;
    min-height: 0;
    display: flex;
    flex-direction: column;
    margin: 0 3px 3px;
    border: 1px solid #444;
}

/* options bar */
.options {
    height: 34px;
    display: flex;
    align-items: center;
    border-bottom: 1px solid #666;
    padding: 0 0 2px 4px;
    font-family: Roboto, sans-serif;
    font-size: 10px;
    color: #000;
    flex: none;
}
.grip {
    width: 4px;
    height: 24px;
    margin-right: 10px;
    background: conic-gradient(#777 25%, transparent 0) 0 0 / 2px 2px;
}
.preset {
    gap: 5px;
    margin-right: 9px;
}
.line.tall { height: 30px; }
.modes {
    display: flex;
    gap: 2px;
    margin: 0 4px 0 11px;
}
.modes button {
    height: 20px;
}
.modes .on {
    width: 20px;
    background: #bbb;
    border: 1px solid #444;
    border-radius: 3px;
}
.size {
    flex-direction: column;
    width: 22px;
    margin-left: 8px;
    line-height: 14px;
}
.dot {
    width: 10px;
    height: 10px;
    border-radius: 50%;
    background: #000;
    margin-bottom: 2px;
}
.size-arrow { margin: 0 10px 0 5px; }
.check {
    display: flex;
    align-items: center;
    gap: 4px;
    margin-left: 6px;
    white-space: nowrap;
}
.check input {
    appearance: none;
    width: 11px;
    height: 11px;
    border: 1px solid #777;
    background: linear-gradient(135deg, #ccc, #fff);
}
.check input:checked {
    background: #fff url("data:image/svg+xml,%3Csvg xmlns='http://www.w3.org/2000/svg' viewBox='0 0 9 9'%3E%3Cpath d='M1 4l3 3 4-6' fill='none' stroke='%23347' stroke-width='2'/%3E%3C/svg%3E");
}
.check + .line { margin: 0 12px 0 6px; height: 24px; }
.refine {
    width: 101px;
    height: 21px;
    border: 1px solid #666;
    border-radius: 3px;
    background: linear-gradient(#f4f4f4, #ddd);
    white-space: nowrap;
}

/* toolbox */
.main {
    flex: 1;
    min-height: 0;
    display: flex;
}
.toolbox {
    width: 37px;
    flex: none;
    display: flex;
    flex-direction: column;
    border-right: 1px solid #333;
}
.dark-head {
    height: 11px;
    flex: none;
    background: linear-gradient(#666, #333);
    display: flex;
    align-items: center;
    padding-left: 3px;
}
.dots {
    width: 28px;
    height: 4px;
    margin: 4px auto;
    flex: none;
    background: conic-gradient(#777 25%, transparent 0) 0 0 / 2px 2px;
}
.tools {
    display: flex;
    flex-direction: column;
    align-items: center;
    padding-top: 1px;
}
.tool {
    position: relative;
    width: 26px;
    height: 23px;
    border: none;
    border-radius: 3px;
    background: none;
    display: flex;
    align-items: center;
    justify-content: center;
    flex: none;
}
.tool::after {
    content: "";
    position: absolute;
    right: 2px;
    bottom: 1px;
    border: 2px solid #000;
    border-top-color: transparent;
    border-left-color: transparent;
}
.tool.single::after { display: none; }
.tool.on {
    background: #bbb;
    border: 1px solid #444;
}
.type {
    font-family: "Liberation Serif", serif;
    font-size: 22px;
    color: #333;
}
.tools hr {
    width: 28px;
    height: 1px;
    border: none;
    background: #888;
    margin: 1px 0 2px;
}
.swatches { margin-left: 1px; }
.rest {
    flex: 1;
    background: #646464;
}

/* documents */
.center {
    flex: 1;
    min-width: 0;
    display: flex;
    flex-direction: column;
}
.tabs {
    display: flex;
    background: linear-gradient(#9c9c9c, #868686);
    font-weight: 600;
    flex: none;
}
.tab {
    display: flex;
    align-items: center;
    color: #3a3a3a;
    border-right: 1px solid #555;
    white-space: nowrap;
}
.tab.on {
    background: linear-gradient(#eee, #d6d6d6);
    color: #333;
}
.doc-tabs {
    height: 20px;
    border-bottom: 1px solid #333;
}
.doc-tabs .tab {
    padding: 0 4px 0 8px;
    gap: 3px;
}
.x {
    width: 12px;
    height: 12px;
    border: 1px solid #777;
    border-radius: 2px;
    background: none;
    display: flex;
    align-items: center;
    justify-content: center;
}
.work {
    flex: 1;
    display: flex;
}
.canvas {
    flex: 1;
    background: #bfbfbf;
}
.vscroll {
    width: 15px;
    background: #efefef;
    border-left: 2px solid #fafafa;
    padding: 8px 3px;
}
.status {
    height: 16px;
    display: flex;
    align-items: stretch;
    font-size: 10px;
    background: #d6d6d6;
    flex: none;
}
.status input {
    width: 47px;
    border: none;
    background: #fff;
    padding-left: 11px;
}
.info {
    width: 23px;
    padding-left: 6px;
    background: #c8c8c8;
    border-right: 1px solid #777;
}
.doc {
    width: 221px;
    text-align: center;
    border-right: 1px solid #777;
}
.go {
    width: 14px;
    padding-left: 4px;
    border-right: 1px solid #777;
}
.hscroll {
    flex: 1;
    background: #efefef;
}
.anim-tabs {
    height: 18px;
    border-top: 1px solid #333;
    border-bottom: 1px solid #777;
    font-size: 10px;
}
.anim-tabs .tab { padding: 0 5px 0 6px; }
.frames {
    padding: 2px 2px 0;
    flex: none;
}
.cell {
    width: 65px;
    height: 78px;
    padding: 3px;
    background: #3399ff;
    color: #fff;
    font-size: 10px;
}
.shot {
    height: 60px;
    border: 1px solid #fff;
    background: #d6d6d6;
    outline: 1px solid #3399ff;
    outline-offset: -2px;
}
.shot span {
    display: block;
    width: 13px;
    height: 14px;
    margin: 1px 0 0 1px;
    border: 1px solid #888;
    border-width: 0 1px 1px 0;
    color: #000;
    font-weight: bold;
    line-height: 14px;
    text-align: center;
}
.strip {
    height: 20px;
    margin: 5px 2px 0;
    padding: 3px 0 3px 2px;
    background: repeating-conic-gradient(#ccc 0 25%, #fff 0 50%) 0 0 / 8px 8px;
}
.strip i {
    display: block;
    height: 14px;
    background: linear-gradient(#000, #078ba3);
}
.delay {
    margin-left: auto;
    gap: 1px;
}
.controls {
    height: 19px;
    display: flex;
    align-items: center;
    padding-bottom: 3px;
    border-top: 1px solid #888;
    font-size: 10px;
    flex: none;
}
.loop {
    width: 67px;
    padding-left: 11px;
    gap: 11px;
    border-right: 1px solid #888;
}
.play {
    display: flex;
    gap: 12px;
    width: 110px;
    padding-left: 5px;
}
.tween {
    width: 28px;
    height: 15px;
    padding-left: 5px;
    border: 1px solid #888;
    border-width: 0 1px;
}
.new-frame { margin-left: 10px; }
.del-frame { margin: 0 7px 0 15px; }
.anim-scroll {
    height: 100%;
    display: flex;
    align-items: center;
    justify-content: space-between;
    padding: 0 5px;
}
.convert { margin: 0 24px 0 6px; }

/* right dock */
.dock {
    width: 36px;
    flex: none;
    display: flex;
    flex-direction: column;
    background: #646464;
    border-left: 1px solid #333;
}
.dock .dark-head {
    justify-content: flex-end;
    padding-right: 3px;
}
.group {
    display: flex;
    flex-direction: column;
    align-items: center;
    background: #d6d6d6;
    border-top: 1px solid #eee;
    border-bottom: 1px solid #777;
}
.group .dots { margin: 3px auto; }
.group button {
    width: 30px;
    height: 28px;
    justify-content: center;
}
.group.one { height: 45px; }
.group.two { height: 74px; }
.group.three { height: 43px; }
.group .on {
    background: #aaa;
    border: 1px solid #444;
    border-radius: 3px;
}

/* document and menus */
.document {
    position: absolute;
    left: 305px;
    top: 276px;
    width: 400px;
    height: 151px;
    padding: 31px 0 12px 30px;
    background: repeating-conic-gradient(#ccc 0 25%, #fff 0 50%) 8px 0 / 25px 25px;
    box-shadow: 1px 2px 4px rgba(0, 0, 0, 0.5);
}
.fill {
    height: 108px;
    padding: 1px;
    background:
        repeating-linear-gradient(#fff 0 6px, #000 6px 12px) right 1px top / 1px 100% no-repeat,
        repeating-linear-gradient(90deg, #fff 0 6px, #000 6px 12px) left bottom 1px / 100% 1px no-repeat,
        linear-gradient(#000, #078ba3);
}
.context-menu {
    position: absolute;
    left: 351px;
    top: 440px;
    width: 228px;
    padding: 13px 2px 2px;
    background: #f0f0f0;
    border: 1px solid #979797;
    box-shadow: 3px 3px 3px rgba(0, 0, 0, 0.55);
}
.items {
    margin-left: 27px;
    border-left: 1px solid #e0e0e0;
    box-shadow: inset 1px 0 0 #fff;
}
.items button {
    display: block;
    width: 100%;
    height: 22px;
    padding-left: 4px;
    border: none;
    background: none;
    text-align: left;
    font-size: 12px;
    color: #000;
}
.items button:disabled { color: #777; }
.items hr, .big-menu hr {
    border: none;
    height: 2px;
    margin: 3px 0 3px 2px;
    border-top: 1px solid #ddd;
    background: #fff;
}
.lens {
    position: absolute;
    left: 220px;
    top: 182px;
    width: 464px;
    height: 274px;
    padding: 4px;
    border: 1px solid #555;
    border-radius: 6px;
    background: linear-gradient(100deg, #b4b4b4, #ccc 20%, #b4b4b4 40%, #ddd 60%, #b8b8b8);
    box-shadow: inset 0 0 0 1px #e4e4e4, 0 1px 5px rgba(0, 0, 0, 0.5);
}
.glass {
    height: 264px;
    margin: 0 1px;
    border: 1px solid #999;
    border-top: 2px solid #555;
    background: #bfbfbf;
    padding: 66px 0 0 4px;
    overflow: hidden;
}
.big-doc {
    height: 196px;
    padding: 46px 0 0 34px;
    background: repeating-conic-gradient(#ccc 0 25%, #fff 0 50%) 0 0 / 24px 24px;
    box-shadow: 0 0 4px rgba(0, 0, 0, 0.5);
}
.big-fill {
    height: 150px;
    border: 2px dashed #000;
    border-width: 2px 0 0 2px;
    background: linear-gradient(#000, #078090) padding-box;
    padding-left: 33px;
}
.big-menu {
    width: 342px;
    height: 160px;
    margin-top: -8px;
    padding: 2px 3px 0;
    background: linear-gradient(90deg, transparent 43px, #ddd 43px, #ddd 44px, #fff 44px, #fff 46px, transparent 46px) #f0f0f0;
    border: 2px solid #979797;
}
.big-menu button {
    display: block;
    width: 100%;
    height: 33px;
    padding-left: 46px;
    border: 1px solid transparent;
    border-radius: 4px;
    background: none;
    text-align: left;
    font-size: 17px;
    color: #000;
}
.big-menu .hot {
    border-color: #aecff7;
    background: linear-gradient(rgba(245, 246, 250, 0.8), rgba(224, 232, 248, 0.8));
}
.big-menu hr {
    margin: 7px 0 0 43px;
    height: 3px;
}

/* layers panel */
.layers-panel {
    position: absolute;
    right: 40px;
    top: 228px;
    bottom: 57px;
    width: 265px;
    display: flex;
    flex-direction: column;
    background: #d6d6d6;
    border: 1px solid #333;
    font-size: 10px;
}
.panel-top {
    height: 3px;
    background: #444;
    flex: none;
}
.panel-tabs {
    height: 16px;
    justify-content: space-between;
}
.panel-tabs .tab { padding: 0 6px; }
.panel-icons {
    display: flex;
    align-items: center;
    gap: 6px;
    padding-right: 4px;
}
.bar {
    width: 1px;
    height: 9px;
    background: #333;
}
.prow {
    display: flex;
    align-items: center;
    height: 26px;
    margin: 0 2px;
    padding: 0 3px;
    border-bottom: 1px solid #888;
    flex: none;
    white-space: nowrap;
}
.prow select {
    appearance: none;
    width: 147px;
    height: 19px;
    border: 1px solid #ccc;
    border-radius: 2px;
    padding-left: 2px;
    background: #fff url("data:image/svg+xml,%3Csvg xmlns='http://www.w3.org/2000/svg' width='7' height='4'%3E%3Cpath d='M0 0h7L3.500 4z'/%3E%3C/svg%3E") no-repeat right 4px center;
}
.num {
    display: flex;
    align-items: center;
    gap: 4px;
    margin-left: auto;
}
.num input {
    width: 38px;
    height: 18px;
    border: 1px solid #999;
    background: #fff;
    padding-left: 5px;
}
.step {
    width: 15px;
    height: 18px;
    border: 1px solid #aab;
    border-left: none;
    background: #e4e4ea;
    display: flex;
    align-items: center;
    justify-content: center;
}
.icons {
    display: flex;
    align-items: center;
    gap: 4px;
    margin-left: 5px;
}
.icons.wide {
    gap: 6px;
}
.bloq { margin-left: 2px; }
.prow .check { margin-left: auto; }
.layer-area {
    flex: 1;
    min-height: 0;
    display: flex;
    margin: 0 2px;
    border-bottom: 1px solid #888;
}
.layer-list { flex: 1; }
.layer {
    height: 22px;
    display: flex;
    align-items: center;
    gap: 2px;
    border-bottom: 1px solid #999;
}
.layer.on {
    background: #3399ff;
    color: #fff;
    font-weight: bold;
}
.vis {
    width: 23px;
    height: 21px;
    justify-content: center;
    background: #d6d6d6;
    border-right: 1px solid #888;
}
.thumb {
    width: 32px;
    height: 15px;
    margin: 0 6px 0 1px;
    border: 1px solid #000;
    background: repeating-conic-gradient(#ccc 0 25%, #fff 0 50%) 0 0 / 8px 8px;
    padding: 3px 0 0 2px;
}
.thumb.full {
    outline: 1px solid #fff;
    box-shadow: 0 0 0 2px #000;
}
.thumb i {
    display: block;
    height: 10px;
    background: linear-gradient(#032c34, #078ba3);
}
.layer-scroll {
    width: 15px;
    background: #efefef;
    border-left: 1px solid #fff;
    display: flex;
    flex-direction: column;
    justify-content: space-between;
    align-items: center;
    padding: 7px 0;
}
.panel-foot {
    height: 19px;
    display: flex;
    align-items: center;
    justify-content: space-between;
    margin: 0 2px 0 61px;
    padding-bottom: 2px;
    flex: none;
}
.fx {
    font-family: "Liberation Serif", serif;
    font-style: italic;
    font-weight: bold;
    font-size: 14px;
    color: #333;
}
.corner {
    width: 10px;
    height: 10px;
    background: conic-gradient(#777 25%, transparent 0) 0 0 / 2px 2px;
    clip-path: polygon(100% 0, 100% 100%, 0 100%);
}

/* taskbar */
.taskbar {
    height: 40px;
    display: flex;
    align-items: center;
    flex: none;
    padding: 0 2px 0 8px;
    background: linear-gradient(#333, #080808 3px, #000);
    color: #fff;
    font-size: 11px;
}
.apps {
    flex: 1;
    display: flex;
    gap: 4px;
    margin-left: 14px;
}
.task {
    width: 58px;
    height: 38px;
    border: 1px solid transparent;
    border-radius: 3px;
    background: none;
    display: flex;
    align-items: center;
    justify-content: center;
}
.task.open {
    border-color: #888;
    background: linear-gradient(160deg, #777, #333 45%, #1c1c1c 46%, #2a2a2a);
}
.task.active {
    border-color: #ccc;
    background: linear-gradient(160deg, #ccc, #888 45%, #666 46%, #999);
}
.ps-text {
    font-family: "Open Sans", sans-serif;
    font-weight: bold;
    font-size: 15px;
    fill: #a8e2ff;
}
.tray {
    display: flex;
    align-items: center;
    gap: 10px;
    margin-right: 18px;
}
.clock {
    display: flex;
    flex-direction: column;
    align-items: center;
    margin-right: 11px;
}
.show-desktop {
    width: 13px;
    height: 38px;
    border: 1px solid #666;
    background: linear-gradient(150deg, #555, #111 50%);
}
```
